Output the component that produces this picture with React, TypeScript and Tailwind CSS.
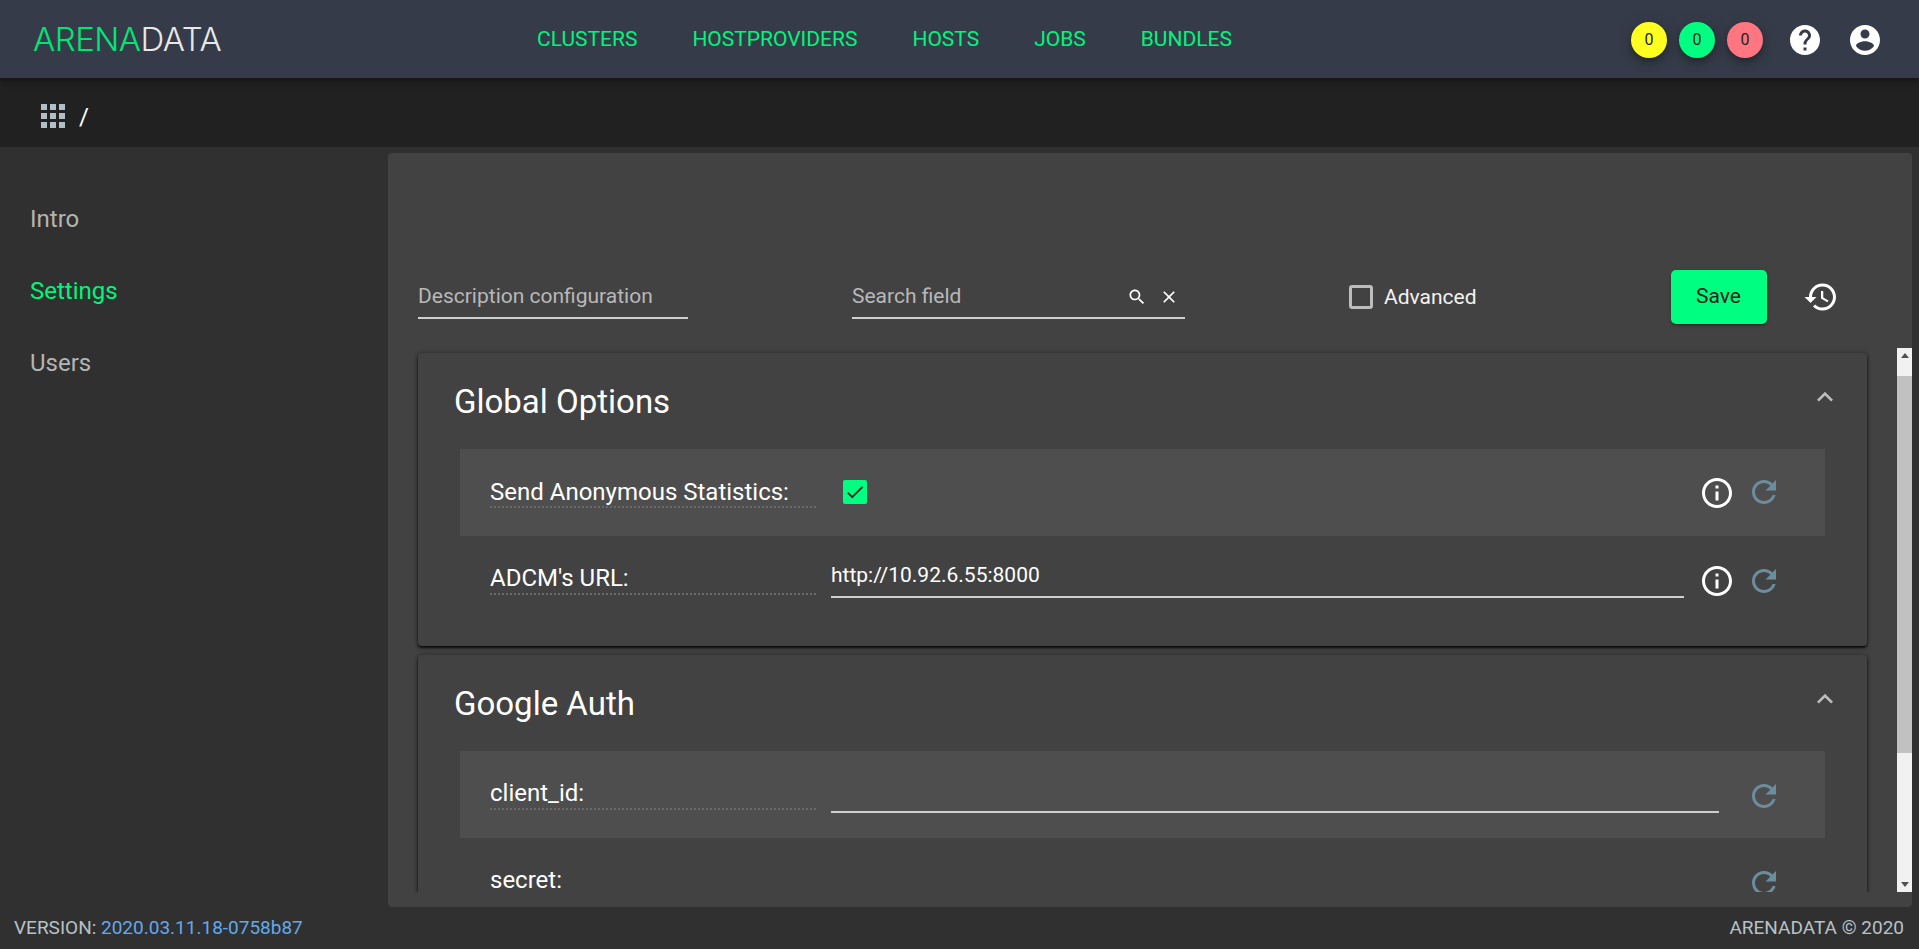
const font = { fontFamily: 'Roboto, sans-serif' };

const paths = {
  apps: 'M4 8h4V4H4v4zm6 12h4v-4h-4v4zm-6 0h4v-4H4v4zm0-6h4v-4H4v4zm6 0h4v-4h-4v4zm6-10v4h4V4h-4zm-6 4h4V4h-4v4zm6 6h4v-4h-4v4zm0 6h4v-4h-4v4z',
  help: 'M12 2C6.48 2 2 6.48 2 12s4.48 10 10 10 10-4.48 10-10S17.52 2 12 2zm1 17h-2v-2h2v2zm2.07-7.75l-.9.92C13.45 12.9 13 13.5 13 15h-2v-.5c0-1.1.45-2.1 1.17-2.83l1.24-1.26c.37-.36.59-.86.59-1.41 0-1.1-.9-2-2-2s-2 .9-2 2H8c0-2.21 1.79-4 4-4s4 1.79 4 4c0 .88-.36 1.68-.93 2.25z',
  account:
    'M12 2C6.48 2 2 6.48 2 12s4.48 10 10 10 10-4.48 10-10S17.52 2 12 2zm0 3c1.66 0 3 1.34 3 3s-1.34 3-3 3-3-1.34-3-3 1.34-3 3-3zm0 14.2c-2.5 0-4.71-1.28-6-3.22.03-1.99 4-3.08 6-3.08 1.99 0 5.97 1.09 6 3.08-1.29 1.94-3.5 3.22-6 3.22z',
  search:
    'M15.5 14h-.79l-.28-.27C15.41 12.59 16 11.11 16 9.5 16 5.91 13.09 3 9.5 3S3 5.91 3 9.5 5.91 16 9.5 16c1.61 0 3.09-.59 4.23-1.57l.27.28v.79l5 4.99L20.49 19l-4.99-5zm-6 0C7.01 14 5 11.99 5 9.5S7.01 5 9.5 5 14 7.01 14 9.5 11.99 14 9.5 14z',
  close:
    'M19 6.41L17.59 5 12 10.59 6.41 5 5 6.41 10.59 12 5 17.59 6.41 19 12 13.41 17.59 19 19 17.59 13.41 12z',
  history:
    'M13 3c-4.97 0-9 4.03-9 9H1l3.89 3.89.07.14L9 12H6c0-3.87 3.13-7 7-7s7 3.13 7 7-3.13 7-7 7c-1.93 0-3.68-.79-4.94-2.06l-1.42 1.42C8.27 19.99 10.51 21 13 21c4.97 0 9-4.03 9-9s-4.03-9-9-9zm-1 5v5l4.28 2.54.72-1.21-3.5-2.08V8H12z',
  refresh:
    'M17.65 6.35C16.2 4.9 14.21 4 12 4c-4.42 0-7.99 3.58-7.99 8s3.57 8 7.99 8c3.73 0 6.84-2.55 7.73-6h-2.08c-.82 2.33-3.04 4-5.65 4-3.31 0-6-2.69-6-6s2.69-6 6-6c1.66 0 3.14.69 4.22 1.78L13 11h7V4l-2.35 2.35z',
  info: 'M11 7h2v2h-2zm0 4h2v6h-2zm1-9C6.48 2 2 6.48 2 12s4.48 10 10 10 10-4.48 10-10S17.52 2 12 2zm0 18c-4.41 0-8-3.59-8-8s3.59-8 8-8 8 3.59 8 8-3.59 8-8 8z',
  expand: 'M12 8l-6 6 1.41 1.41L12 10.83l4.59 4.58L18 14z',
  check: 'M9 16.17L4.83 12l-1.42 1.41L9 19 21 7l-1.41-1.41z',
};

const Icon = ({ d, className }: { d: string; className: string }) => (
  <svg viewBox="0 0 24 24" fill="currentColor" className={className}>
    <path d={d} />
  </svg>
);

const Row = ({
  label,
  shaded,
  info,
  low,
  children,
}: {
  label: string;
  shaded?: boolean;
  info?: boolean;
  low?: boolean;
  children?: React.ReactNode;
}) => (
  <div className={`flex h-[87px] shrink-0 items-center pl-[30px] ${shaded ? 'bg-[#4e4e4e]' : ''}`}>
    <div className={`h-[31px] w-[326px] shrink-0 border-b-2 border-dotted border-[#6a6a6a] text-[24px] leading-[28px] text-white ${low ? '' : 'pt-[1px]'}`}>
      {label}
    </div>
    <div className="ml-[15px] flex h-full min-w-0 flex-1 items-center">{children}</div>
    {info && <Icon d={paths.info} className={`ml-[15px] h-[36px] w-[36px] shrink-0 text-white ${low ? 'mt-[3px]' : ''}`} />}
    <Icon
      d={paths.refresh}
      className={`mr-[43px] h-[36px] w-[36px] shrink-0 text-[#6b8e9f] ${info ? 'ml-[11px]' : 'ml-[27px]'} ${low ? 'mt-[2px]' : 'mt-[-2px]'}`}
    />
  </div>
);

const Input = ({ value }: { value?: string }) => (
  <div className="h-[36px] flex-1 border-b-2 border-[#cfcfcf] pt-[1px] text-[21px] leading-[24px] text-white">{value}</div>
);

const Panel = ({ title, children }: { title: string; children: React.ReactNode }) => (
  <div className="mb-[9px] shrink-0 rounded-[4px] bg-[#424242] pb-[23px] shadow-[0_3px_1px_-2px_rgba(0,0,0,0.5),0_2px_2px_0_rgba(0,0,0,0.5),0_1px_5px_0_rgba(0,0,0,0.6)]">
    <div className="flex h-[96px] items-start justify-between pl-[36px] pr-[26px]">
      <div className="mt-[27px] text-[33px] leading-[44px] text-white">{title}</div>
      <Icon d={paths.expand} className="mt-[28px] h-[32px] w-[32px] text-[#bdbdbd]" />
    </div>
    <div className="flex flex-col px-[42px]">{children}</div>
  </div>
);

const Scrollbar = () => (
  <div className="flex w-[15px] shrink-0 flex-col bg-[#f1f1f1]">
    <div className="flex h-[15px] items-center justify-center">
      <svg viewBox="0 0 8 5" className="h-[5px] w-[8px] fill-[#505050]">
        <path d="M4 0l4 5H0z" />
      </svg>
    </div>
    <div className="mt-[13px] h-[377px] bg-[#c1c1c1]" />
    <div className="flex-1" />
    <div className="flex h-[15px] items-center justify-center">
      <svg viewBox="0 0 8 5" className="h-[5px] w-[8px] fill-[#505050]">
        <path d="M0 0h8L4 5z" />
      </svg>
    </div>
  </div>
);

const Badge = ({ color }: { color: string }) => (
  <div
    className={`flex h-[36px] w-[36px] items-center justify-center rounded-full text-[16px] text-[#212121] shadow-[0_3px_5px_-1px_rgba(0,0,0,0.2),0_6px_10px_0_rgba(0,0,0,0.14),0_1px_18px_0_rgba(0,0,0,0.12)] ${color}`}
  >
    0
  </div>
);

export default function App() {
  return (
    <div style={font} className="flex h-[949px] w-full flex-col overflow-hidden bg-[#303030]">
      <header className="z-10 flex h-[78px] shrink-0 items-center bg-[#353b48] shadow-[0_2px_4px_-1px_rgba(0,0,0,0.2),0_4px_5px_0_rgba(0,0,0,0.14),0_1px_10px_0_rgba(0,0,0,0.12)]">
        <div
          style={{ fontFamily: 'Inter, sans-serif' }}
          className="ml-[33px] w-[190px] whitespace-nowrap text-[33px] font-light leading-[40px] tracking-[-0.5px]"
        >
          <span className="text-[#00e676]">ARENA</span>
          <span className="text-[#e8e8e8]">DATA</span>
        </div>
        <nav className="ml-[314px] mt-[1px] flex gap-[55px] text-[21px] text-[#00f57c]">
          <span>CLUSTERS</span>
          <span>HOSTPROVIDERS</span>
          <span>HOSTS</span>
          <span>JOBS</span>
          <span>BUNDLES</span>
        </nav>
        <div className="ml-auto flex items-center pr-[36px] pt-[2px]">
          <div className="flex gap-[12px]">
            <Badge color="bg-[#ffff20]" />
            <Badge color="bg-[#00ff80]" />
            <Badge color="bg-[#ff7680]" />
          </div>
          <Icon d={paths.help} className="ml-[24px] h-[36px] w-[36px] text-white" />
          <Icon d={paths.account} className="ml-[24px] h-[36px] w-[36px] text-white" />
        </div>
      </header>

      <div className="flex h-[69px] shrink-0 items-center bg-[#212121] pl-[35px]">
        <Icon d={paths.apps} className="mt-[6px] h-[36px] w-[36px] text-[#b0bec5]" />
        <span className="ml-[8px] mt-[9px] text-[24px] leading-[32px] text-white">/</span>
      </div>

      <div className="flex min-h-0 flex-1 pt-[6px]">
        <aside className="flex w-[388px] shrink-0 flex-col gap-[40px] pl-[30px] pt-[50px] text-[24px] leading-[32px] text-[#b4b4b4]">
          <span>Intro</span>
          <span className="text-[#00f57c]">Settings</span>
          <span>Users</span>
        </aside>

        <main className="flex h-[754px] w-[1524px] shrink-0 flex-col rounded-[4px] bg-[#424242] pb-[15px] pl-[30px] pt-[117px]">
          <div className="flex h-[54px] shrink-0 items-center">
            <div className="mt-[-2px] flex h-[46px] w-[270px] items-center border-b-2 border-[#cfcfcf] pt-[4px] text-[21px] text-[#b8b8b8]">
              Description configuration
            </div>
            <div className="ml-[164px] mt-[-2px] flex h-[46px] w-[333px] items-center border-b-2 border-[#cfcfcf] pt-[4px] text-[21px] text-[#b8b8b8]">
              Search field
              <Icon d={paths.search} className="ml-auto h-[20px] w-[20px] text-white" />
              <Icon d={paths.close} className="ml-[12px] mr-[6px] h-[20px] w-[20px] text-white" />
            </div>
            <div className="ml-[164px] h-[24px] w-[24px] rounded-[3px] border-[3px] border-[#bdbdbd]" />
            <span className="ml-[11px] mt-[1px] text-[21px] text-[#f2f2f2]">Advanced</span>
            <button className="ml-[194px] h-[54px] w-[96px] rounded-[5px] bg-[#00ff80] text-[21px] text-[#212121] shadow-[0_3px_1px_-2px_rgba(0,0,0,0.2),0_2px_2px_0_rgba(0,0,0,0.14),0_1px_5px_0_rgba(0,0,0,0.12)]">
              Save
            </button>
            <Icon d={paths.history} className="ml-[36px] h-[36px] w-[36px] text-white" />
          </div>

          <div className="mt-[24px] flex min-h-0 flex-1">
            <div className="ml-[-4px] flex min-h-0 w-[1457px] shrink-0 flex-col overflow-hidden px-[4px] pt-[5px]">
              <Panel title="Global Options">
                <Row label="Send Anonymous Statistics:" shaded info>
                  <div className="ml-[12px] mt-[-2px] flex h-[24px] w-[24px] items-center justify-center rounded-[2px] bg-[#00ff80]">
                    <Icon d={paths.check} className="h-[22px] w-[22px] text-[#303030]" />
                  </div>
                </Row>
                <Row label="ADCM's URL:" info low>
                  <Input value="http://10.92.6.55:8000" />
                </Row>
              </Panel>
              <Panel title="Google Auth">
                <Row label="client_id:" shaded low>
                  <Input />
                </Row>
                <Row label="secret:" low>
                  <Input />
                </Row>
              </Panel>
            </div>
            <div className="ml-[26px]">
              <div className="flex h-full">
                <Scrollbar />
              </div>
            </div>
          </div>
        </main>
      </div>

      <footer className="flex h-[42px] shrink-0 items-center justify-between pl-[14px] pr-[15px] text-[19px] text-[#b7c2c8]">
        <span>
          VERSION: <span className="text-[#64a8ec]">2020.03.11.18-0758b87</span>
        </span>
        <span>ARENADATA © 2020</span>
      </footer>
    </div>
  );
}
